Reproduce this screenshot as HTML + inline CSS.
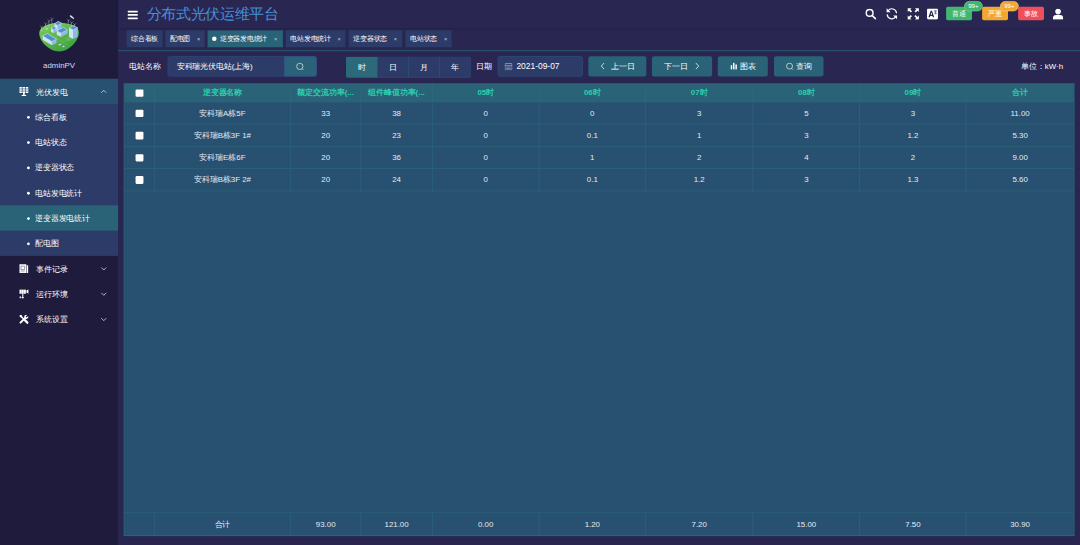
<!DOCTYPE html>
<html lang="zh">
<head>
<meta charset="utf-8">
<title>分布式光伏运维平台</title>
<style>
*{box-sizing:border-box;}
html,body{margin:0;padding:0;width:1080px;height:545px;overflow:hidden;background:#292752;font-family:"Liberation Sans",sans-serif;}
#app{position:absolute;left:0;top:0;width:1920px;height:969px;transform:scale(0.5625);transform-origin:0 0;background:#292752;color:#fff;font-size:14px;overflow:hidden;}
.abs{position:absolute;}
/* sidebar */
#side{position:absolute;left:0;top:0;width:210px;height:969px;background:#1f1b3d;}
#logo{position:absolute;left:60.4px;top:17.8px;width:88.9px;height:81.8px;}
#uname{position:absolute;left:0;width:210px;top:106px;height:18px;line-height:18px;text-align:center;font-size:14px;color:#d9dbe6;}
.mi{position:absolute;left:0;width:210px;height:45px;line-height:47px;font-size:14px;color:#fff;white-space:nowrap;}
.mi .tx{position:absolute;left:64px;top:0;}
.mi svg.ic{position:absolute;left:34px;top:14px;width:17px;height:17px;}
.mi svg.ar{position:absolute;left:179px;top:18px;width:11px;height:9px;}
.si{position:absolute;left:0;width:210px;height:45px;line-height:47px;font-size:14px;color:#fff;white-space:nowrap;}
.si .tx{position:absolute;left:62px;top:0;}
.si .dot{position:absolute;left:48px;top:21px;width:5px;height:5px;border-radius:50%;background:#fff;}
.si.on{background:#2a6277;}
/* navbar */
#nav{position:absolute;left:210px;top:0;width:1710px;height:50px;background:#292752;box-shadow:0 2px 5px rgba(10,10,40,0.35);}
#title{position:absolute;left:51px;top:8px;height:34px;line-height:34px;font-size:26px;color:#4590dc;white-space:nowrap;}
.hb{position:absolute;left:17px;width:18px;height:3px;background:#fff;border-radius:1px;}
.bdg{position:absolute;top:12px;width:46px;height:24px;line-height:24px;border-radius:3px;text-align:center;font-size:12px;color:#fff;}
.pill{position:absolute;top:2px;width:33px;height:18px;line-height:15px;border-radius:9px;border:1.5px solid #fff;text-align:center;font-size:11px;color:#fff;}
/* tags */
#tags{position:absolute;left:210px;top:50px;width:1710px;height:41px;border-bottom:2px solid #2a526d;}
.tag{position:absolute;top:4px;height:30px;line-height:30px;font-size:12px;color:#fff;background:#2d3b68;padding:0 8px;white-space:nowrap;}
.tag.on{background:#2a6277;}
.tag .x{display:inline-block;width:18px;text-align:right;font-size:10px;color:#c5d0e0;}
.tag .d{display:inline-block;width:8px;height:8px;border-radius:50%;background:#fff;margin-right:6px;position:relative;top:0px;}
/* filter */
.lbl{position:absolute;top:100px;height:36px;line-height:36px;font-size:14px;color:#fff;white-space:nowrap;}
.inp{position:absolute;top:100px;height:36px;line-height:34px;background:#2d3b68;border:1px solid #334c84;border-radius:4px;font-size:14px;color:#fff;white-space:nowrap;}
.btn{position:absolute;top:100px;height:36px;line-height:36px;background:#2a6277;border-radius:4px;font-size:14px;color:#fff;text-align:center;white-space:nowrap;}
.rb{position:absolute;top:0;height:37px;line-height:38px;width:55.25px;text-align:center;background:#2d3b68;border-left:1px solid #2c5a77;font-size:14px;color:#fff;}
/* table */
#tbl{position:absolute;left:220px;top:148px;width:1690px;height:805px;background:#285071;border:1px solid #2b6579;border-bottom:2px solid #2b6478;}
#thead{position:absolute;left:0;top:0;width:1688px;height:32.5px;background:#2a6277;}
.th{position:absolute;top:0;height:32.5px;line-height:31px;text-align:center;font-size:14px;font-weight:bold;color:#2ccfae;border-right:1px solid #2f6c80;white-space:nowrap;overflow:hidden;}
.tr{position:absolute;left:0;width:1688px;height:39.6px;border-bottom:1px solid #2d6a7d;}
.td{position:absolute;top:0;height:39.6px;line-height:38.5px;text-align:center;font-size:14px;color:#e6ebf2;border-right:1px solid #2d6a7d;white-space:nowrap;overflow:hidden;}
.cb{position:absolute;left:20px;width:13.5px;height:13.5px;background:#fff;border-radius:2px;}
#tfoot{position:absolute;left:0;top:761px;width:1688px;height:42px;border-top:1px solid #2d6a7d;}
#tfoot .td{height:42px;line-height:40px;}
</style>
</head>
<body>
<div id="app">
<!-- SIDEBAR -->
<div id="side">
<svg id="logo" viewBox="0 0 592 545">
<defs><linearGradient id="gg" x1="0" y1="0" x2="0.7" y2="1"><stop offset="0" stop-color="#8ad26a"/><stop offset="0.45" stop-color="#60b94a"/><stop offset="1" stop-color="#3b9f45"/></linearGradient></defs>
<path d="M65 275 C65 200 170 150 300 150 C430 150 535 195 535 262 C535 360 420 490 300 490 C180 490 65 370 65 275Z" fill="url(#gg)"/>
<path d="M120 250 L420 420 M230 330 L420 235 M330 390 L500 300" stroke="#86cf68" stroke-width="9" fill="none" opacity="0.45"/>
<path d="M92 250 L92 205" stroke="#dfe7f1" stroke-width="3.5" opacity="0.8"/><path d="M92 205 l-16 -22 M92 205 l20 -14 M92 205 l-4 26" stroke="#eef3f9" stroke-width="3.5" stroke-linecap="round" opacity="0.8"/><path d="M140 225 L140 165" stroke="#dfe7f1" stroke-width="3.5" opacity="0.8"/><path d="M140 165 l-16 -22 M140 165 l20 -14 M140 165 l-4 26" stroke="#eef3f9" stroke-width="3.5" stroke-linecap="round" opacity="0.8"/><path d="M180 205 L180 130" stroke="#dfe7f1" stroke-width="3.5" opacity="0.8"/><path d="M180 130 l-16 -22 M180 130 l20 -14 M180 130 l-4 26" stroke="#eef3f9" stroke-width="3.5" stroke-linecap="round" opacity="0.8"/><path d="M215 190 L215 108" stroke="#dfe7f1" stroke-width="3.5" opacity="0.8"/><path d="M215 108 l-16 -22 M215 108 l20 -14 M215 108 l-4 26" stroke="#eef3f9" stroke-width="3.5" stroke-linecap="round" opacity="0.8"/><path d="M410 185 L410 125" stroke="#dfe7f1" stroke-width="3.5" opacity="0.8"/><path d="M410 125 l-16 -22 M410 125 l20 -14 M410 125 l-4 26" stroke="#eef3f9" stroke-width="3.5" stroke-linecap="round" opacity="0.8"/><path d="M447 205 L447 150" stroke="#dfe7f1" stroke-width="3.5" opacity="0.8"/><path d="M447 150 l-16 -22 M447 150 l20 -14 M447 150 l-4 26" stroke="#eef3f9" stroke-width="3.5" stroke-linecap="round" opacity="0.8"/><path d="M482 215 L482 172" stroke="#dfe7f1" stroke-width="3.5" opacity="0.8"/><path d="M482 172 l-16 -22 M482 172 l20 -14 M482 172 l-4 26" stroke="#eef3f9" stroke-width="3.5" stroke-linecap="round" opacity="0.8"/><ellipse cx="452" cy="83" rx="32" ry="11" transform="rotate(38 452 83)" fill="#cfe3f7"/><path d="M245 160 L285 182 L285 254 L245 232Z" fill="#d3e3f6"/><path d="M285 182 L330 155 L330 227 L285 254Z" fill="#93b9e6"/><path d="M245 160 L290 133 L330 155 L285 182Z" fill="#4f8fd4" stroke="#cfe2f7" stroke-width="7"/><path d="M205 215 L235 232 L235 274 L205 257Z" fill="#d3e3f6"/><path d="M235 232 L270 212 L270 254 L235 274Z" fill="#93b9e6"/><path d="M205 215 L240 195 L270 212 L235 232Z" fill="#4f8fd4" stroke="#cfe2f7" stroke-width="7"/><path d="M272 245 L322 272 L322 317 L272 290Z" fill="#d3e3f6"/><path d="M322 272 L400 232 L400 277 L322 317Z" fill="#93b9e6"/><path d="M272 245 L350 205 L400 232 L322 272Z" fill="#4f8fd4" stroke="#cfe2f7" stroke-width="7"/><path d="M418 210 L468 233 L468 341 L418 318Z" fill="#d3e3f6"/><path d="M468 233 L520 208 L520 316 L468 341Z" fill="#93b9e6"/><path d="M418 210 L470 185 L520 208 L468 233Z" fill="#4f8fd4" stroke="#cfe2f7" stroke-width="7"/><path d="M105 305 L215 372 L215 417 L105 350Z" fill="#d3e3f6"/><path d="M215 372 L270 345 L270 390 L215 417Z" fill="#93b9e6"/><path d="M105 305 L160 278 L270 345 L215 372Z" fill="#4f8fd4" stroke="#cfe2f7" stroke-width="7"/><path d="M290 410 l25 -12 l14 8 l-25 12z M335 432 l22 -11 l14 8 l-22 11z M140 225 l22 -10 l10 6 l-22 10z" fill="#d5e6f6"/><path d="M370 345 l60 -28 M385 358 l60 -28 M400 370 l60 -28" stroke="#a6dc8c" stroke-width="5" opacity="0.6"/></svg>
<div id="uname">adminPV</div>

<div class="abs" style="left:0;top:184px;width:210px;height:271px;background:#2d3b68;"></div>
<div class="mi" style="top:140px;background:#285071;">
<svg class="ic" viewBox="0 0 17 17"><path d="M0.5 0.5h16v11h-16z" fill="#fff"/><path d="M5.6 0.5v11M11.4 0.5v11M0.5 4.1h16M0.5 7.9h16" stroke="#285071" stroke-width="1.1"/><path d="M7 11.5h3v3.2h2.5v1.8h-8v-1.8h2.5z" fill="#fff"/></svg>
<span class="tx">光伏发电</span>
<svg class="ar" viewBox="0 0 11 9"><path d="M1 7 L5.5 2.5 L10 7" fill="none" stroke="#c8d3e0" stroke-width="1.5"/></svg>
</div>
<div class="si" style="top:185px;"><span class="dot"></span><span class="tx">综合看板</span></div>
<div class="si" style="top:230px;"><span class="dot"></span><span class="tx">电站状态</span></div>
<div class="si" style="top:275px;"><span class="dot"></span><span class="tx">逆变器状态</span></div>
<div class="si" style="top:320px;"><span class="dot"></span><span class="tx">电站发电统计</span></div>
<div class="si on" style="top:365px;"><span class="dot"></span><span class="tx">逆变器发电统计</span></div>
<div class="si" style="top:410px;"><span class="dot"></span><span class="tx">配电图</span></div>

<div class="mi" style="top:455px;">
<svg class="ic" viewBox="0 0 17 17"><path d="M0.5 0.8h12.2v15.7h-12.2z" fill="#fff"/><path d="M13.4 2.6h2.8v13.9h-2.8z" fill="#fff"/><path d="M3.2 4.2h6.6v5.8h-6.6z" fill="none" stroke="#1f1b3d" stroke-width="0.9" opacity="0.85"/><path d="M3 12.2h7M3 14.2h7" stroke="#1f1b3d" stroke-width="0.7" opacity="0.7"/></svg>
<span class="tx">事件记录</span>
<svg class="ar" viewBox="0 0 11 9"><path d="M1 2.5 L5.5 7 L10 2.5" fill="none" stroke="#c8d3e0" stroke-width="1.5"/></svg>
</div>
<div class="mi" style="top:500px;">
<svg class="ic" viewBox="0 0 17 17"><path d="M0.5 0.5h11.5v7.5h-11.5z" fill="#fff"/><path d="M4 0.5v7.5M8 0.5v7.5" stroke="#1f1b3d" stroke-width="0.7" opacity="0.6"/><path d="M13 2.6l3.8 -2.2v7.8l-3.8 -2.2z" fill="#fff"/><path d="M5.6 8h1.8v8h-1.8z" fill="#fff"/><path d="M0.8 13.2h2.4v2.8h-2.4zM4.2 14.4h4.2v1.8h-4.2z" fill="#fff"/></svg>
<span class="tx">运行环境</span>
<svg class="ar" viewBox="0 0 11 9"><path d="M1 2.5 L5.5 7 L10 2.5" fill="none" stroke="#c8d3e0" stroke-width="1.5"/></svg>
</div>
<div class="mi" style="top:545px;">
<svg class="ic" viewBox="0 0 17 17"><path d="M2.4 14.6 L12.5 4.5" stroke="#fff" stroke-width="3.4" stroke-linecap="round"/><circle cx="12.8" cy="4.2" r="3.7" fill="#fff"/><path d="M12.6 4.4 L17 0 " stroke="#1f1b3d" stroke-width="2.6"/><path d="M2.2 2.2 L8 8" stroke="#fff" stroke-width="2.4" stroke-linecap="round"/><path d="M0.6 2.6 L2.6 0.6 L5.2 2 L5.6 5.6 L2 5.2z" fill="#fff"/><path d="M9.5 9.5 L14.6 14.6" stroke="#fff" stroke-width="4.2" stroke-linecap="round"/></svg>
<span class="tx">系统设置</span>
<svg class="ar" viewBox="0 0 11 9"><path d="M1 2.5 L5.5 7 L10 2.5" fill="none" stroke="#c8d3e0" stroke-width="1.5"/></svg>
</div>
</div>

<!-- NAVBAR -->
<div id="nav">
<div class="hb" style="top:19px;"></div><div class="hb" style="top:25px;"></div><div class="hb" style="top:31px;"></div>
<div id="title">分布式光伏运维平台</div>
<!-- right icons : nav-local x = native x - 210 -->
<svg class="abs" style="left:1328px;top:15px;width:20px;height:20px;" viewBox="0 0 21 21"><circle cx="8.4" cy="8.4" r="6.3" fill="none" stroke="#fff" stroke-width="2.7"/><path d="M13.2 13.2 L19.2 19.2" stroke="#fff" stroke-width="3.2" stroke-linecap="round"/></svg>
<svg class="abs" style="left:1364px;top:13px;width:23px;height:23px;" viewBox="0 0 23 23"><g transform="translate(23 0) scale(-1 1)"><path d="M3.2 10.5 A8.3 8.3 0 0 1 18.3 6.2" fill="none" stroke="#fff" stroke-width="2.1"/><path d="M19.8 12.5 A8.3 8.3 0 0 1 4.7 16.8" fill="none" stroke="#fff" stroke-width="2.1"/><path d="M20.8 1.6 v7 h-7z" fill="#fff"/><path d="M2.2 21.4 v-7 h7z" fill="#fff"/></g></svg>
<svg class="abs" style="left:1403px;top:14px;width:21px;height:21px;" viewBox="0 0 21 21"><g fill="#fff"><path d="M0.5 0.5h7l-2.3 2.3 3.2 3.2-2.2 2.2-3.2-3.2-2.5 2.5z"/><path d="M20.5 0.5v7l-2.3-2.3-3.2 3.2-2.2-2.2 3.2-3.2-2.5-2.5z"/><path d="M0.5 20.5v-7l2.3 2.3 3.2-3.2 2.2 2.2-3.2 3.2 2.5 2.5z"/><path d="M20.5 20.5h-7l2.3-2.3-3.2-3.2 2.2-2.2 3.2 3.2 2.5-2.5z"/></g></svg>
<svg class="abs" style="left:1438px;top:15px;width:19.5px;height:19.5px;" viewBox="0 0 20 20"><rect x="0" y="0" width="20" height="20" rx="2.5" fill="#fff"/><path d="M2.6 16.2 L6.7 4.2 h2.4 L13.2 16.2 h-2.5 l-0.8-2.6 h-4l-0.8 2.6z M6.6 11.5 h2.7 L7.9 7z" fill="#292752" fill-rule="evenodd"/><path d="M12.6 4.2h5.6M15.4 4.2v5.5M13.4 6.6h4M13.2 9.6h4.6" stroke="#292752" stroke-width="1" fill="none"/></svg>
<div class="bdg" style="left:1472px;background:#41b66e;">普通</div>
<div class="pill" style="left:1504px;background:#41b66e;border-color:#8fd8a8;">99+</div>
<div class="bdg" style="left:1536px;background:#f4a72f;">严重</div>
<div class="pill" style="left:1568px;background:#f4a72f;border-color:#fbd48e;">99+</div>
<div class="bdg" style="left:1600px;background:#ef4f58;">事故</div>
<svg class="abs" style="left:1661px;top:15px;width:20px;height:20px;" viewBox="0 0 20 20"><circle cx="10" cy="5.6" r="5" fill="#fff"/><path d="M1 19.5 v-2.5 a5.5 5.5 0 0 1 5.5 -5.5 h7 a5.5 5.5 0 0 1 5.5 5.5 v2.5z" fill="#fff"/></svg>
</div>

<!-- TAGS -->
<div id="tags">
<div class="tag" style="left:15px;width:64px;">综合看板</div>
<div class="tag" style="left:84px;width:70px;">配电图<span class="x">×</span></div>
<div class="tag on" style="left:159px;width:134px;"><span class="d"></span>逆变器发电统计<span class="x">×</span></div>
<div class="tag" style="left:298px;width:106px;">电站发电统计<span class="x">×</span></div>
<div class="tag" style="left:410px;width:95px;">逆变器状态<span class="x">×</span></div>
<div class="tag" style="left:511px;width:82px;">电站状态<span class="x">×</span></div>
</div>

<!-- FILTER ROW -->
<div class="lbl" style="left:230px;">电站名称</div>
<div class="inp" style="left:298px;width:265px;padding-left:15px;">安科瑞光伏电站(上海)
<div class="abs" style="left:206px;top:-1px;width:58px;height:36px;background:#2a6277;border:1px solid #3a4f96;border-radius:0 4px 4px 0;"></div>
<svg class="abs" style="left:227px;top:10px;width:15px;height:15px;" viewBox="0 0 15 15"><circle cx="7" cy="7" r="5.6" fill="none" stroke="#dfe6ee" stroke-width="1.3"/><path d="M11 11 L13.6 13.6" stroke="#dfe6ee" stroke-width="1.3"/></svg>
</div>
<div class="abs" style="left:615px;top:101px;width:222px;height:37px;border-radius:4px;overflow:hidden;background:#2d3b68;box-shadow:inset 0 0 0 1px #2c5675;">
<div class="rb" style="left:0;background:#2c6a7a;border-left:none;width:56px;">时</div>
<div class="rb" style="left:56px;">日</div>
<div class="rb" style="left:111px;">月</div>
<div class="rb" style="left:166px;width:56px;">年</div>
</div>
<div class="lbl" style="left:846px;">日期</div>
<div class="inp" style="left:885px;width:151px;padding-left:32px;font-size:15px;line-height:33px;border-color:#2e5a80;">2021-09-07
<svg class="abs" style="left:11px;top:10px;width:14px;height:14px;" viewBox="0 0 14 14"><rect x="0.8" y="1.8" width="12.4" height="11.4" rx="1" fill="none" stroke="#b8c4d6" stroke-width="1.1"/><path d="M0.8 5.3h12.4M3 8h8M3 10.6h8" stroke="#b8c4d6" stroke-width="1"/></svg>
</div>
<div class="btn" style="left:1046px;width:103px;"><svg style="width:9px;height:13px;vertical-align:-1px;margin-right:10px;" viewBox="0 0 9 13"><path d="M7 1 L2 6.5 L7 12" fill="none" stroke="#e6edf3" stroke-width="1.5"/></svg>上一日</div>
<div class="btn" style="left:1159px;width:107px;">下一日<svg style="width:9px;height:13px;vertical-align:-1px;margin-left:12px;" viewBox="0 0 9 13"><path d="M2 1 L7 6.5 L2 12" fill="none" stroke="#e6edf3" stroke-width="1.5"/></svg></div>
<div class="btn" style="left:1276px;width:89px;"><svg style="width:13px;height:13px;vertical-align:-1px;margin-right:5px;" viewBox="0 0 13 13"><path d="M1 5h2.6v7.5h-2.6zM5.2 0.5h2.6v12h-2.6zM9.4 3.5h2.6v9h-2.6z" fill="#fff"/></svg>图表</div>
<div class="btn" style="left:1376px;width:88px;"><svg style="width:14px;height:14px;vertical-align:-2px;margin-right:5px;" viewBox="0 0 14 14"><circle cx="6.6" cy="6.6" r="5.3" fill="none" stroke="#e6edf3" stroke-width="1.3"/><path d="M10.4 10.4 L13 13" stroke="#e6edf3" stroke-width="1.3"/></svg>查询</div>
<div class="lbl" style="left:1690px;width:200px;text-align:right;">单位：kW·h</div>
<!-- TABLE -->
<div id="tbl">
<div id="thead">
<div class="th" style="left:0px;width:54px;"><span class="cb" style="top:9.5px;"></span></div>
<div class="th" style="left:54px;width:242px;">逆变器名称</div>
<div class="th" style="left:296px;width:125px;">额定交流功率(...</div>
<div class="th" style="left:421px;width:127px;">组件峰值功率(...</div>
<div class="th" style="left:548px;width:190px;">05时</div>
<div class="th" style="left:738px;width:189px;">06时</div>
<div class="th" style="left:927px;width:191px;">07时</div>
<div class="th" style="left:1118px;width:190px;">08时</div>
<div class="th" style="left:1308px;width:189px;">09时</div>
<div class="th" style="left:1497px;width:191px;border-right:none;">合计</div>
</div>
<div class="tr" style="top:32.5px;">
<div class="td" style="left:0px;width:54px;"><span class="cb" style="top:13px;"></span></div>
<div class="td" style="left:54px;width:242px;">安科瑞A栋5F</div>
<div class="td" style="left:296px;width:125px;">33</div>
<div class="td" style="left:421px;width:127px;">38</div>
<div class="td" style="left:548px;width:190px;">0</div>
<div class="td" style="left:738px;width:189px;">0</div>
<div class="td" style="left:927px;width:191px;">3</div>
<div class="td" style="left:1118px;width:190px;">5</div>
<div class="td" style="left:1308px;width:189px;">3</div>
<div class="td" style="left:1497px;width:191px;border-right:none;">11.00</div>
</div>
<div class="tr" style="top:72.1px;">
<div class="td" style="left:0px;width:54px;"><span class="cb" style="top:13px;"></span></div>
<div class="td" style="left:54px;width:242px;">安科瑞B栋3F 1#</div>
<div class="td" style="left:296px;width:125px;">20</div>
<div class="td" style="left:421px;width:127px;">23</div>
<div class="td" style="left:548px;width:190px;">0</div>
<div class="td" style="left:738px;width:189px;">0.1</div>
<div class="td" style="left:927px;width:191px;">1</div>
<div class="td" style="left:1118px;width:190px;">3</div>
<div class="td" style="left:1308px;width:189px;">1.2</div>
<div class="td" style="left:1497px;width:191px;border-right:none;">5.30</div>
</div>
<div class="tr" style="top:111.7px;">
<div class="td" style="left:0px;width:54px;"><span class="cb" style="top:13px;"></span></div>
<div class="td" style="left:54px;width:242px;">安科瑞E栋6F</div>
<div class="td" style="left:296px;width:125px;">20</div>
<div class="td" style="left:421px;width:127px;">36</div>
<div class="td" style="left:548px;width:190px;">0</div>
<div class="td" style="left:738px;width:189px;">1</div>
<div class="td" style="left:927px;width:191px;">2</div>
<div class="td" style="left:1118px;width:190px;">4</div>
<div class="td" style="left:1308px;width:189px;">2</div>
<div class="td" style="left:1497px;width:191px;border-right:none;">9.00</div>
</div>
<div class="tr" style="top:151.3px;">
<div class="td" style="left:0px;width:54px;"><span class="cb" style="top:13px;"></span></div>
<div class="td" style="left:54px;width:242px;">安科瑞B栋3F 2#</div>
<div class="td" style="left:296px;width:125px;">20</div>
<div class="td" style="left:421px;width:127px;">24</div>
<div class="td" style="left:548px;width:190px;">0</div>
<div class="td" style="left:738px;width:189px;">0.1</div>
<div class="td" style="left:927px;width:191px;">1.2</div>
<div class="td" style="left:1118px;width:190px;">3</div>
<div class="td" style="left:1308px;width:189px;">1.3</div>
<div class="td" style="left:1497px;width:191px;border-right:none;">5.60</div>
</div>
<div id="tfoot">
<div class="td" style="left:0px;width:54px;"></div>
<div class="td" style="left:54px;width:242px;">合计</div>
<div class="td" style="left:296px;width:125px;">93.00</div>
<div class="td" style="left:421px;width:127px;">121.00</div>
<div class="td" style="left:548px;width:190px;">0.00</div>
<div class="td" style="left:738px;width:189px;">1.20</div>
<div class="td" style="left:927px;width:191px;">7.20</div>
<div class="td" style="left:1118px;width:190px;">15.00</div>
<div class="td" style="left:1308px;width:189px;">7.50</div>
<div class="td" style="left:1497px;width:191px;border-right:none;">30.90</div>
</div>
</div>
</div>
</body>
</html>
